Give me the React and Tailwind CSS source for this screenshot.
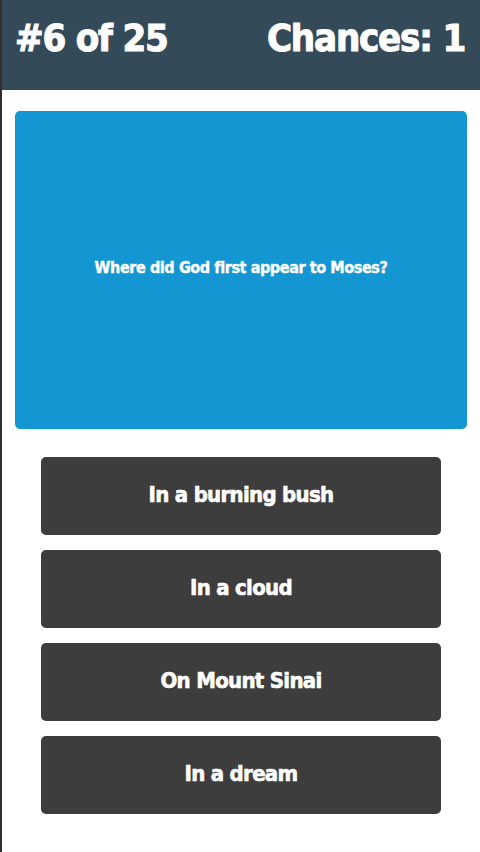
import React from "react";

const answers = ["In a burning bush", "In a cloud", "On Mount Sinai", "In a dream"];

export default function App() {
  return (
    <div
      className="w-[480px] h-[852px] bg-white border-l-2 border-[#2f2f2f] flex flex-col"
      style={{ fontFamily: '"DejaVu Sans Condensed", "DejaVu Sans", sans-serif' }}
    >
      <div className="h-[90px] shrink-0 bg-[#354a59] flex items-center justify-between pl-[13px] pr-[15px] pb-[14px]">
        <span className="text-[38px] font-bold text-white tracking-[-1.2px] [-webkit-text-stroke:1px_white]">#6 of 25</span>
        <span className="text-[38px] font-bold text-white tracking-[-1.2px] [-webkit-text-stroke:1px_white]">Chances: 1</span>
      </div>

      <div className="px-[13px] pt-[21px]">
        <div className="h-[318px] bg-[#1496d2] rounded-[5px] flex items-center justify-center px-4">
          <p className="text-[16px] font-bold text-white tracking-[-0.4px] -mt-[4px] [-webkit-text-stroke:0.4px_white]">
            Where did God first appear to Moses?
          </p>
        </div>
      </div>

      <div className="flex flex-col gap-[15px] px-[39px] pt-[28px]">
        {answers.map((a) => (
          <button
            key={a}
            className="h-[78px] bg-[#3d3d3d] rounded-[5px] flex items-center justify-center pb-[4px]"
          >
            <span className="text-[22px] font-bold text-white tracking-[-0.7px] [-webkit-text-stroke:0.6px_white]">{a}</span>
          </button>
        ))}
      </div>
    </div>
  );
}
